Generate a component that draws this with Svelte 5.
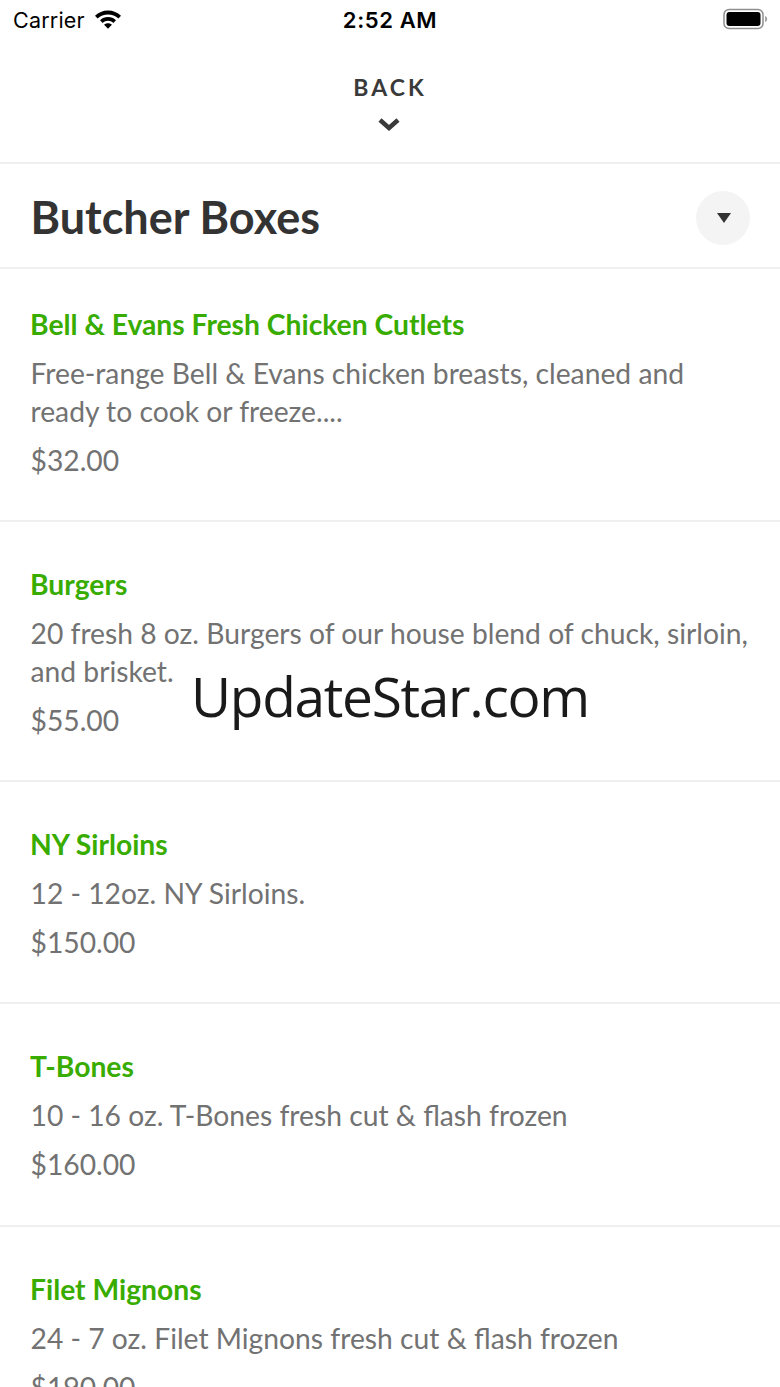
<script>
  const items = [
    { name: 'Bell & Evans Fresh Chicken Cutlets', desc: 'Free-range Bell & Evans chicken breasts, cleaned and ready to cook or freeze....', price: '$32.00' },
    { name: 'Burgers', desc: '20 fresh 8 oz. Burgers of our house blend of chuck, sirloin, and brisket.', price: '$55.00' },
    { name: 'NY Sirloins', desc: '12 - 12oz. NY Sirloins.', price: '$150.00' },
    { name: 'T-Bones', desc: '10 - 16 oz. T-Bones fresh cut & flash frozen', price: '$160.00' },
    { name: 'Filet Mignons', desc: '24 - 7 oz. Filet Mignons fresh cut & flash frozen', price: '$190.00' }
  ];
</script>

<div class="page">
  <div class="status">
    <div class="left">
      <span class="carrier">Carrier</span>
      <svg class="wifi" width="30" height="22" viewBox="0 0 30 22"><path d="M15 2.500C9.800 2.500 5.600 4.500 2 7.800l2.600 2.700C7.500 7.900 11 6.400 15 6.400s7.500 1.500 10.400 4.100L28 7.800C24.400 4.500 20.200 2.500 15 2.500z"/><path d="M15 9c-3.100 0-5.700 1.100-8 3.200l2.700 2.700c1.500-1.300 3.300-2.100 5.300-2.100s3.800.8 5.300 2.100l2.700-2.700C20.700 10.100 18.100 9 15 9z"/><path d="M15 15.200c-1.500 0-2.800.5-3.900 1.500l3.900 4 3.900-4c-1.100-1-2.400-1.500-3.900-1.500z"/></svg>
    </div>
    <span class="time">2:52 AM</span>
    <svg class="battery" width="46" height="22" viewBox="0 0 46 22"><rect x="1" y="1.500" width="39" height="19" rx="5" fill="none" stroke="#8e8e8e" stroke-width="1.500"/><rect x="3.500" y="4" width="34" height="14" rx="3" fill="#000"/><path d="M42 8c1.500.4 2.200 1.500 2.200 3s-.7 2.600-2.200 3z" fill="#a5a5a5"/></svg>
  </div>

  <header class="back">
    <span class="back-label">BACK</span>
    <svg class="chevron" width="24" height="16" viewBox="0 0 24 16"><path d="M3 4l9 8 9-8" fill="none" stroke="#3a3a3a" stroke-width="4.500"/></svg>
  </header>

  <div class="title-row">
    <h1>Butcher Boxes</h1>
    <button class="toggle" aria-label="Collapse"><span class="tri"></span></button>
  </div>

  <ul class="list">
    {#each items as item}
      <li>
        <div class="name">{item.name}</div>
        <div class="desc">{item.desc}</div>
        <div class="price">{item.price}</div>
      </li>
    {/each}
  </ul>

  <div class="watermark">UpdateStar.com</div>
</div>

<style>
  :global(body) { margin: 0; background: #fff; }
  .page {
    position: relative;
    width: 780px;
    height: 1387px;
    overflow: hidden;
    background: #fff;
    font-family: Lato, sans-serif;
  }
  .status {
    height: 40px;
    display: grid;
    grid-template-columns: 1fr auto 1fr;
    align-items: center;
    padding: 0 13px;
    color: #000;
    font-family: Inter, sans-serif;
  }
  .left { display: flex; align-items: center; gap: 8px; }
  .carrier { font-size: 21.500px; font-weight: 400; letter-spacing: 0.2px; }
  .wifi { margin-top: -3px; }
  .time { font-size: 22px; font-weight: 600; letter-spacing: 0.6px; }
  .battery { justify-self: end; margin-right: -2px; margin-top: -3px; }
  .back {
    height: 124px;
    box-sizing: border-box;
    border-bottom: 2px solid #efefef;
    display: flex;
    flex-direction: column;
    align-items: center;
    padding-top: 33px;
    color: #3a3a3a;
  }
  .back-label {
    font-size: 23px;
    line-height: 28px;
    font-weight: 700;
    letter-spacing: 3px;
    margin-bottom: 15px;
  }
  .chevron { margin-right: 2px; }
  .title-row {
    height: 105px;
    box-sizing: border-box;
    border-bottom: 2px solid #efefef;
    display: flex;
    align-items: center;
    justify-content: space-between;
    padding: 6px 30px 0 30.500px;
  }
  h1 {
    margin: -4px 0 0;
    font-size: 45px;
    font-weight: 700;
    color: #333;
    line-height: 52px;
  }
  .toggle {
    width: 54px;
    height: 54px;
    border: 0;
    padding: 0;
    border-radius: 50%;
    background: #f4f4f4;
    display: flex;
    align-items: center;
    justify-content: center;
    margin-top: -2px;
  }
  .tri {
    width: 0;
    height: 0;
    border-left: 7px solid transparent;
    border-right: 7px solid transparent;
    border-top: 10px solid #333;
    margin: 1px 0 0 1px;
  }
  .list { list-style: none; margin: 0; padding: 0; }
  li {
    box-sizing: border-box;
    padding: 42px 30px 41.120px;
    border-bottom: 2px solid #efefef;
  }
  li:first-child { padding-top: 35px; padding-bottom: 41.200px; }
  .name {
    font-size: 28.250px;
    line-height: 40px;
    font-weight: 700;
    color: #38ac00;
  }
  .desc {
    margin: 10px 0 0 0.500px;
    font-size: 28.250px;
    line-height: 38px;
    color: #727272;
  }
  .price {
    margin: 11px 0 0 0.500px;
    font-size: 28.250px;
    line-height: 38px;
    color: #727272;
  }
  .watermark {
    position: absolute;
    left: 191px;
    top: 658px;
    font-family: "Open Sans", sans-serif;
    font-size: 55px;
    line-height: 76px;
    letter-spacing: -1.300px;
    color: #1a1a1a;
    white-space: nowrap;
  }
</style>
